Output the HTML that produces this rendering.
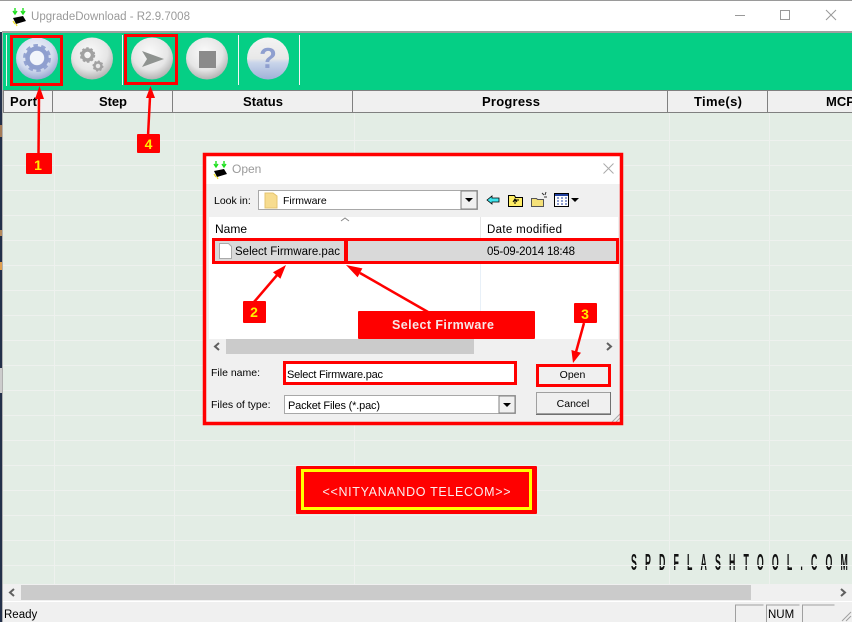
<!DOCTYPE html>
<html><head><meta charset="utf-8"><style>
html,body{margin:0;padding:0;background:#f0f0f0;width:852px;height:622px;overflow:hidden}
svg{display:block}
text{font-family:"Liberation Sans",sans-serif}
</style></head><body>
<svg width="852" height="622" viewBox="0 0 852 622" xmlns="http://www.w3.org/2000/svg">
<defs>
<radialGradient id="g" cx="45%" cy="35%" r="70%"><stop offset="0" stop-color="#fafafa"/><stop offset=".6" stop-color="#e6e6e6"/><stop offset="1" stop-color="#a8a8a8"/></radialGradient>
<radialGradient id="b" cx="45%" cy="35%" r="70%"><stop offset="0" stop-color="#f4f6fb"/><stop offset=".6" stop-color="#d3dcef"/><stop offset="1" stop-color="#8d9ecb"/></radialGradient>
<linearGradient id="h" x1="0" y1="0" x2="0" y2="1"><stop offset="0" stop-color="#f4f4f4"/><stop offset=".5" stop-color="#e8e8e8"/><stop offset=".6" stop-color="#c9d5ea"/><stop offset="1" stop-color="#9fb1d8"/></linearGradient>
<g id="chip"><path d="M4 0v5M2 3l2 3 2-3M12 0v5M10 3l2 3 2-3" stroke="#1fe01f" stroke-width="1.4" fill="none"/><path d="M2 10l10-2 3 5-10 3z" fill="#000"/><path d="M2 13l2 3M5 16l1 2" stroke="#f0e020" stroke-width="1.2"/></g>
</defs>
<!-- window -->
<rect width="852" height="622" fill="#f0f0f0"/>
<rect x="0" y="1" width="852" height="31" fill="#fff"/>
<rect x="0" y="0" width="852" height="1" fill="#9a9a9a"/>
<use href="#chip" x="11" y="8"/>
<text x="31" y="20" font-size="11.500" fill="#9a9a9a" textLength="159">UpgradeDownload - R2.9.7008</text>
<path d="M735 15.500h10" stroke="#999"/>
<rect x="780.500" y="10.500" width="9" height="9" fill="none" stroke="#999"/>
<path d="M826 10l10 10M836 10l-10 10" stroke="#999"/>
<!-- toolbar -->
<rect x="2" y="31" width="850" height="2" fill="#a0a0a0"/>
<rect x="2" y="33" width="850" height="57" fill="#05cf85"/>
<rect x="2" y="33" width="1" height="57" fill="#a0a0a0"/>
<rect x="6" y="35" width="1" height="51" fill="#f4f4f4"/>
<rect x="122" y="35" width="1" height="50" fill="#f4f4f4"/>
<rect x="238" y="35" width="1" height="50" fill="#f4f4f4"/>
<rect x="299" y="35" width="1" height="50" fill="#f4f4f4"/>
<circle cx="37" cy="58.500" r="21" fill="url(#b)"/>
<circle cx="37" cy="58" r="12.500" fill="none" stroke="#95a4d2" stroke-width="3" stroke-dasharray="4.500 3.350"/>
<circle cx="37" cy="58" r="9.500" fill="none" stroke="#8f9fcf" stroke-width="4.500"/>
<circle cx="37" cy="58" r="7" fill="#f2f5fb"/>
<circle cx="92" cy="58.500" r="21" fill="url(#g)"/>
<circle cx="87.500" cy="55" r="5" fill="none" stroke="#a2a2a2" stroke-width="3.500"/>
<circle cx="87.500" cy="55" r="7" fill="none" stroke="#a2a2a2" stroke-width="1.500" stroke-dasharray="2.500 2"/>
<circle cx="98" cy="66" r="3.500" fill="none" stroke="#a2a2a2" stroke-width="2.500"/>
<circle cx="98" cy="66" r="5" fill="none" stroke="#a2a2a2" stroke-width="1" stroke-dasharray="2 1.900"/>
<circle cx="152" cy="58.500" r="21" fill="url(#g)"/>
<path d="M142 51l22 8-22 8 5-8z" fill="#8f9390"/>
<circle cx="207" cy="58.500" r="21" fill="url(#g)"/>
<rect x="199" y="51" width="17" height="17" fill="#8b8b8b"/>
<circle cx="268" cy="58.500" r="21" fill="url(#h)"/>
<text x="268" y="68" font-size="29" font-weight="bold" fill="#8f9fcf" text-anchor="middle">?</text>
<rect x="11.500" y="36.500" width="50" height="48" fill="none" stroke="#f00" stroke-width="3"/>
<rect x="125.500" y="35.500" width="51" height="48" fill="none" stroke="#f00" stroke-width="3"/>
<!-- grid -->
<rect x="3" y="113" width="849" height="471" fill="#e3ede5"/>
<path d="M3 140.500h849M3 165.500h849M3 190.500h849M3 215.500h849M3 240.500h849M3 265.500h849M3 290.500h849M3 315.500h849M3 340.500h849M3 365.500h849M3 390.500h849M3 415.500h849M3 440.500h849M3 465.500h849M3 490.500h849M3 515.500h849M3 540.500h849M3 565.500h849M54.500 113v471M174.500 113v471M354.500 113v471M669.500 113v471M769.500 113v471" stroke="#eef1ee" fill="none"/>
<!-- header -->
<rect x="3" y="90" width="849" height="23" fill="#f0f0f0"/>
<path d="M3 90.500h849M3 112.500h849" stroke="#808080" fill="none"/>
<path d="M3.500 90v23M52.500 90v23M172.500 90v23M352.500 90v23M667.500 90v23M767.500 90v23" stroke="#808080" fill="none"/>
<g font-size="13" font-weight="bold" fill="#000">
<text x="10" y="106" textLength="27">Port</text>
<text x="113" y="106" text-anchor="middle" textLength="28">Step</text>
<text x="263" y="106" text-anchor="middle" textLength="40">Status</text>
<text x="511" y="106" text-anchor="middle" textLength="58">Progress</text>
<text x="718" y="106" text-anchor="middle" textLength="48">Time(s)</text>
<text x="826" y="106">MCP</text>
</g>
<!-- left desktop strip -->
<rect x="0" y="32" width="2" height="590" fill="#23304a"/>
<rect x="2" y="32" width="1" height="590" fill="#b0b0b0"/>
<rect x="0" y="125" width="2" height="12" fill="#a57c58"/>
<rect x="0" y="230" width="2" height="6" fill="#b58a5c"/>
<rect x="0" y="262" width="2" height="8" fill="#e0a050"/>
<rect x="0" y="368" width="2" height="25" fill="#ccc"/>
<!-- Text watermark -->
<text transform="translate(631 570) scale(.8 2.100)" font-size="11" fill="#111" font-weight="bold" textLength="271">SPDFLASHTOOL.COM</text>
<path d="M630 565.500h222" stroke="#eef1ee"/>
<!-- bottom scrollbar -->
<rect x="3" y="585" width="849" height="15" fill="#f0f0f0"/>
<rect x="21" y="585" width="730" height="15" fill="#cbcbcb"/>
<path d="M14 589l-4 3.500 4 3.500M841 589l4 3.500-4 3.500" fill="none" stroke="#606060" stroke-width="2"/>
<rect x="3" y="601" width="849" height="1" fill="#fff"/>
<!-- status -->
<text x="4" y="618" font-size="11.500" fill="#000">Ready</text>
<path d="M735.500 622v-17h28M766.500 622v-17h33M802.500 622v-17h32" fill="none" stroke="#a0a0a0"/>
<text x="768" y="618" font-size="11.500" fill="#000">NUM</text>
<path d="M851 612l-9 9M851 616l-5 5" stroke="#a0a0a0" fill="none"/>
<!-- dialog -->
<rect x="204" y="154" width="418" height="270" fill="#f0f0f0"/>
<rect x="204" y="154" width="418" height="30" fill="#fff"/>
<use href="#chip" x="212" y="161"/>
<text x="232" y="173" font-size="12" fill="#9a9a9a">Open</text>
<path d="M603.500 163.500l10 10M613.500 163.500l-10 10" stroke="#aaa" fill="none"/>
<text x="214" y="204" font-size="10.500" fill="#000">Look in:</text>
<rect x="258.500" y="190.500" width="219" height="19" fill="#fff" stroke="#a8a8a8"/>
<path d="M265 193h8l4 3v12h-12z" fill="#f7dc8f" stroke="#e4c46f"/>
<text x="283" y="204" font-size="10.500" fill="#000">Firmware</text>
<rect x="461" y="191" width="16" height="18" fill="#f0f0f0" stroke="#808080"/>
<path d="M465 198h8l-4 4z" fill="#000"/>
<!-- tool icons -->
<path d="M487 200l5-4v2h7v4h-7v2z" fill="#3fe5ee" stroke="#000" stroke-width=".8"/>
<path d="M508.500 195.500h6l1 2h7v9h-14z" fill="#ffee66" stroke="#000"/>
<path d="M515 204v-4M513 202l2-3 2 3M515 200h4" stroke="#000" fill="none"/>
<path d="M531.500 198.500h5l1 1h6v7h-12z" fill="#f5e178" stroke="#555"/>
<path d="M542 193l2 2M546 192l-1 3M547 197h-3" stroke="#333"/>
<rect x="554.500" y="193.500" width="14" height="13" fill="#fff" stroke="#000"/>
<rect x="555" y="194" width="13" height="2" fill="#2040a0"/>
<path d="M557 198h2M561 198h2M565 198h2M557 201h2M561 201h2M565 201h2M557 204h2M561 204h2M565 204h2" stroke="#2040a0"/>
<path d="M571 198h8l-4 4z" fill="#000"/>
<!-- list -->
<rect x="209" y="217" width="409" height="122" fill="#fff"/>
<path d="M480.500 217v22" stroke="#e5e5e5"/>
<path d="M480.500 240v99" stroke="#e8f0f8"/>
<path d="M341 221l4-3 4 3" fill="none" stroke="#888"/>
<text x="215" y="233" font-size="12" fill="#000" textLength="32">Name</text>
<text x="487" y="233" font-size="11.500" fill="#000" textLength="75">Date modified</text>
<rect x="214" y="240" width="404" height="22" fill="#d9d9d9"/>
<path d="M219.500 243.500h9l3 3v12h-12z" fill="#fff" stroke="#aaa"/>
<text x="235" y="255" font-size="11.500" fill="#000" textLength="105">Select Firmware.pac</text>
<text x="487" y="255" font-size="11.500" fill="#000" textLength="88">05-09-2014 18:48</text>
<rect x="213.500" y="239.500" width="404" height="23" fill="none" stroke="#f00" stroke-width="3"/>
<rect x="344" y="239" width="4" height="24" fill="#f00"/>
<!-- dlg scrollbar -->
<rect x="209" y="339" width="409" height="15" fill="#f0f0f0"/>
<rect x="226" y="339" width="248" height="15" fill="#cbcbcb"/>
<path d="M219 343l-4 3.500 4 3.500M607 343l4 3.500-4 3.500" fill="none" stroke="#606060" stroke-width="2"/>
<!-- form -->
<text x="211" y="376" font-size="10.500" fill="#000">File name:</text>
<rect x="284.500" y="362.500" width="231" height="21" fill="#fff" stroke="#f00" stroke-width="3"/>
<text x="287" y="378" font-size="11" fill="#000" textLength="96">Select Firmware.pac</text>
<text x="211" y="408" font-size="10.500" fill="#000">Files of type:</text>
<rect x="284.500" y="395.500" width="231" height="18" fill="#fff" stroke="#a8a8a8"/>
<text x="288" y="409" font-size="11" fill="#000" textLength="92">Packet Files (*.pac)</text>
<rect x="499" y="396" width="16" height="17" fill="#f0f0f0" stroke="#808080"/>
<path d="M503 403h8l-4 4z" fill="#000"/>
<rect x="537.500" y="365.500" width="72" height="20" fill="#f0f0f0" stroke="#f00" stroke-width="3"/>
<text x="572.500" y="378" font-size="10.500" fill="#000" text-anchor="middle">Open</text>
<rect x="536.500" y="392.500" width="74" height="21" fill="#f0f0f0" stroke="#a0a0a0"/>
<path d="M536 414.500h75M610.500 392v22" stroke="#707070" fill="none"/>
<text x="573" y="407" font-size="10.500" fill="#000" text-anchor="middle">Cancel</text>
<path d="M620 414l-8 8M620 418l-4 4" stroke="#aaa" fill="none"/>
<rect x="204.500" y="154.500" width="417" height="269" fill="none" stroke="#f00" stroke-width="3.500"/>
<!-- arrows -->
<g fill="#f00" stroke="#f00">
<path d="M38.500 155L39 98" stroke-width="2.500" fill="none"/><path d="M39.500 86l-4.500 13h9z" stroke="none"/>
<path d="M148 136L150 97" stroke-width="2.500" fill="none"/><path d="M150.500 86l-4.500 12h9z" stroke="none"/>
<path d="M254 302L278 274" stroke-width="2.500" fill="none"/><path d="M286 265l-13 7.200 7.400 6.600z" stroke="none"/>
<path d="M428 312L360 273" stroke-width="2.500" fill="none"/><path d="M346 265l11.600 12.200 4.800-8.800z" stroke="none"/>
<path d="M584 323L576 352" stroke-width="2.500" fill="none"/><path d="M573 363l-1.600-13 9.600 2.700z" stroke="none"/>
</g>
<!-- labels -->
<g font-weight="bold" font-size="14" fill="#ffee00" text-anchor="middle">
<rect x="26" y="153" width="26" height="21" rx="1" fill="#f00"/><text x="38" y="170">1</text>
<rect x="137" y="134" width="23" height="19" rx="1" fill="#f00"/><text x="148.500" y="149">4</text>
<rect x="243" y="301" width="23" height="22" rx="1" fill="#f00"/><text x="254" y="317">2</text>
<rect x="574" y="303" width="23" height="20" rx="1" fill="#f00"/><text x="585" y="319">3</text>
</g>
<rect x="358" y="311" width="177" height="28" rx="1" fill="#f00"/>
<text x="443" y="329" font-size="12.500" font-weight="bold" fill="#f6e6e6" text-anchor="middle" textLength="102">Select Firmware</text>
<rect x="296" y="466" width="241" height="48" rx="1" fill="#f00"/>
<rect x="302.500" y="470.500" width="228" height="38" fill="none" stroke="#ff0" stroke-width="3"/>
<text x="416.500" y="496" font-size="12.500" fill="#fbeeee" text-anchor="middle" textLength="188">&lt;&lt;NITYANANDO TELECOM&gt;&gt;</text>
</svg>
</body></html>
